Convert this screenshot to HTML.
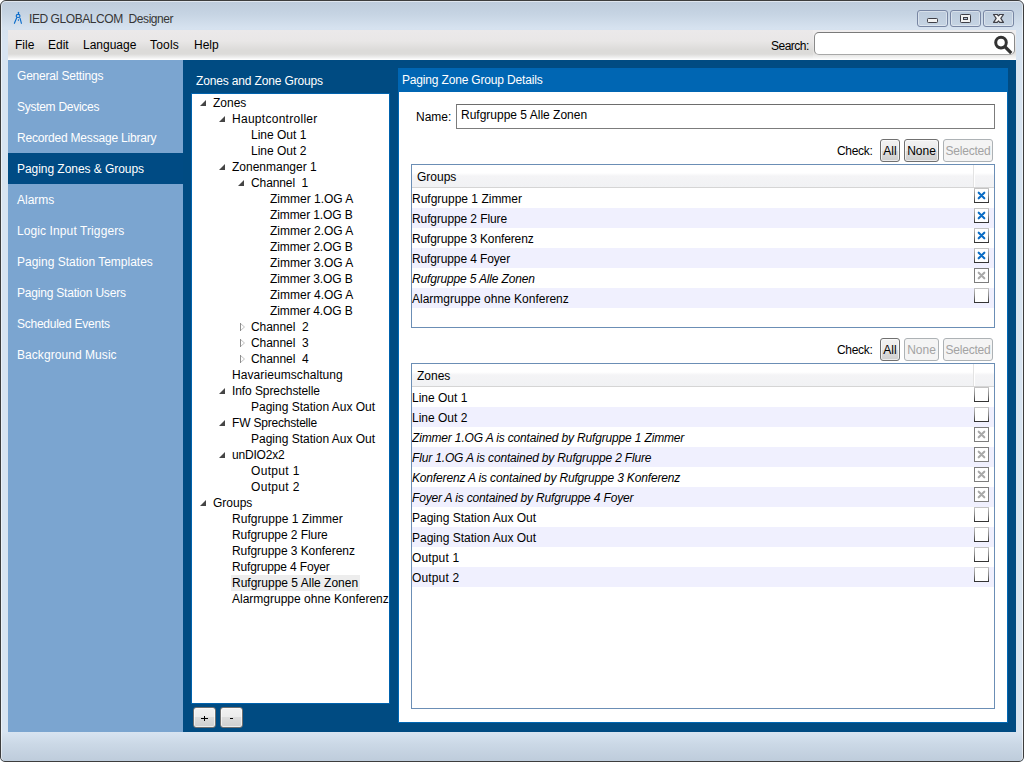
<!DOCTYPE html>
<html><head><meta charset="utf-8"><style>
*{box-sizing:border-box}
html,body{margin:0;padding:0;width:1024px;height:762px;overflow:hidden;background:#fff}
body{font-family:"Liberation Sans",sans-serif;font-size:12px;color:#000;position:relative}
.a{position:absolute}
.t{position:absolute;white-space:nowrap;line-height:14px;font-size:12px}
#frame{position:absolute;left:0;top:0;width:1024px;height:762px;border-radius:6px 6px 5px 5px;
 background:linear-gradient(#bdcbdb 0px,#c6d4e3 14px,#d6e2ef 28px,#d8e4f1 40px)}
#bottomframe{position:absolute;left:1px;width:1022px;top:732px;height:29px;background:linear-gradient(#d8e4f1,#cbd8e6 12px,#bfcddc 28px)}
#border{position:absolute;left:0;top:0;width:1024px;height:762px;border:1px solid #3d3d3d;border-radius:6px 6px 5px 5px}
#hl{position:absolute;left:1px;top:1px;width:1022px;height:760px;border:1px solid rgba(255,255,255,.5);border-radius:5px 5px 4px 4px;border-bottom:none}
#menubar{position:absolute;left:8px;top:30px;width:1008px;height:30px;
 background:linear-gradient(#ebe9ea 0px,#e9e7e7 11px,#dcdbd9 20px,#dcdbd9 24px,#efefef 27.5px,#fdfdfd 29.5px)}
#sidebar{position:absolute;left:8px;top:60px;width:175px;height:672px;background:#7ba5d0}
#main{position:absolute;left:183px;top:60px;width:833px;height:672px;background:#004b82}
.side{position:absolute;left:0;width:175px;height:31px;color:#fff}
.side span{position:absolute;left:9px;top:9px;line-height:14px;white-space:nowrap}
.side.sel{background:#004b84}
.tb{position:absolute;top:10px;width:31px;height:17px;border:1px solid #7886a3;border-radius:3px;
 background:linear-gradient(#bccbdc,#c6d4e3);box-shadow:inset 0 0 0 1px rgba(255,255,255,.4)}
.btn{position:absolute;border:1px solid #707070;border-radius:3px;
 background:linear-gradient(#f2f2f2,#ebebeb 50%,#dddddd 51%,#cfcfcf);box-shadow:inset 0 0 0 1px rgba(255,255,255,.6)}
.btn.pm{background:linear-gradient(#f2f2f2,#ebebeb 47%,#dddddd 47.5%,#cfcfcf)}
.btn.dis{border-color:#adb2b5;background:#f4f4f4;box-shadow:none;color:#a3a3a3}
.btn span{position:absolute;left:0;right:0;text-align:center;line-height:14px;white-space:nowrap}
.lst{position:absolute;left:411px;width:584px;border:1px solid #6b8eb5;background:#fff;overflow:hidden}
.hdr{position:absolute;left:0;top:0;width:582px;height:23px;background:linear-gradient(#fff 0,#fff 8px,#f4f4f6 11px,#f1f2f4 22px);border-bottom:1px solid #d5d5d5}
.sep{position:absolute;left:561px;top:0;width:2px;height:22px;border-left:1px solid #e3e3e3;border-right:1px solid #fff}
.row{position:absolute;left:0;width:582px;height:20px}
.row.alt{background:#f0f0fe}
.row .t{left:0px;top:4px}
.cb{position:absolute;left:562px;top:0;width:15px;height:15px;background:linear-gradient(#c8c8c8,#8a8a8a 50%,#2e2e2e)}
.cb:before{content:"";position:absolute;left:1px;top:1px;right:1px;bottom:1px;background:#fff}
.cb.dis{background:#7d7d7d}
</style></head><body>
<div id="frame"></div><div id="bottomframe"></div>
<svg class="a" style="left:11px;top:9px" width="15" height="17" viewBox="0 0 15 17">
 <g fill="none" stroke="#0d6dcb" stroke-width="1.15" stroke-linecap="round">
  <line x1="7.5" y1="3.2" x2="7.5" y2="5"/><ellipse cx="7.1" cy="6.9" rx="1.9" ry="1.6"/>
  <line x1="5.6" y1="9" x2="3.4" y2="14.3"/><line x1="9.1" y1="9.3" x2="10.4" y2="14.3"/><line x1="7.4" y1="10.6" x2="7.4" y2="11.6" stroke-width="0.9"/>
 </g></svg>
<div class="t" style="left:29px;top:12px;color:#363636;letter-spacing:-0.43px">IED GLOBALCOM&nbsp; Designer</div>
<div class="tb" style="left:917px"><svg class="a" style="left:8px;top:6px" width="13" height="8"><rect x="1.5" y="1.5" width="10" height="4" rx="0.8" fill="#f2f2f2" stroke="#3f3f46"/></svg></div>
<div class="tb" style="left:950px"><svg class="a" style="left:8px;top:2px" width="13" height="11"><rect x="1.5" y="1.5" width="10" height="8" rx="0.8" fill="#f2f2f2" stroke="#3f3f46"/><rect x="4.5" y="4.5" width="4" height="2" fill="#b3c1d4" stroke="#3f3f46"/></svg></div>
<div class="tb" style="left:983px"><svg class="a" style="left:8px;top:2px" width="14" height="12"><polygon points="1.5,1.5 5.3,1.5 6.5,2.9 7.7,1.5 11.5,1.5 8.8,5.4 11.5,9.3 7.7,9.3 6.5,7.9 5.3,9.3 1.5,9.3 4.2,5.4" fill="#f4f4f4" stroke="#3f3f46" stroke-width="1.2" stroke-linejoin="round"/></svg></div>
<div id="menubar"></div>
<div class="t" style="left:15px;top:38px;letter-spacing:0px">File</div>
<div class="t" style="left:48px;top:38px;letter-spacing:0px">Edit</div>
<div class="t" style="left:83px;top:38px;letter-spacing:0px">Language</div>
<div class="t" style="left:150px;top:38px;letter-spacing:0.2px">Tools</div>
<div class="t" style="left:194px;top:38px;letter-spacing:0px">Help</div>
<div class="t" style="left:771px;top:39px;letter-spacing:-0.5px">Search:</div>
<div class="a" style="left:813px;top:30px;width:203px;height:29px;background:rgba(255,255,255,.2)"></div>
<div class="a" style="left:814px;top:32px;width:201px;height:23px;border:1px solid #8a8a8a;border-top-color:#7a7a7a;border-bottom-color:#a8a8a8;border-radius:5px;background:#fff"></div>
<svg class="a" style="left:992px;top:34px" width="22" height="22"><circle cx="9" cy="8.6" r="5.3" fill="none" stroke="#333" stroke-width="3"/><line x1="12.6" y1="12.4" x2="19.3" y2="19.1" stroke="#333" stroke-width="3.3"/></svg>
<div id="sidebar">
<div class="side" style="top:0px"><span style="letter-spacing:-0.2px">General Settings</span></div>
<div class="side" style="top:31px"><span style="letter-spacing:-0.28px">System Devices</span></div>
<div class="side" style="top:62px"><span style="letter-spacing:-0.2px">Recorded Message Library</span></div>
<div class="side sel" style="top:93px"><span style="letter-spacing:-0.05px">Paging Zones &amp; Groups</span></div>
<div class="side" style="top:124px"><span style="letter-spacing:0px">Alarms</span></div>
<div class="side" style="top:155px"><span style="letter-spacing:0.1px">Logic Input Triggers</span></div>
<div class="side" style="top:186px"><span style="letter-spacing:0px">Paging Station Templates</span></div>
<div class="side" style="top:217px"><span style="letter-spacing:-0.2px">Paging Station Users</span></div>
<div class="side" style="top:248px"><span style="letter-spacing:-0.25px">Scheduled Events</span></div>
<div class="side" style="top:279px"><span style="letter-spacing:0.06px">Background Music</span></div>
</div>
<div id="main"></div>
<div class="t" style="left:196px;top:74px;color:#fff;letter-spacing:-0.15px">Zones and Zone Groups</div>
<div class="a" style="left:191px;top:93px;width:199px;height:611px;border:1px solid #0062ad;background:#fff;overflow:hidden">
<svg class="a" style="left:7px;top:5px" width="8" height="8"><polygon points="1,7 7,1 7,7" fill="#454545"/></svg>
<div class="t" style="left:21px;top:2px">Zones</div>
<svg class="a" style="left:26px;top:21px" width="8" height="8"><polygon points="1,7 7,1 7,7" fill="#454545"/></svg>
<div class="t" style="left:40px;top:18px;letter-spacing:0.28px">Hauptcontroller</div>
<div class="t" style="left:59px;top:34px">Line Out 1</div>
<div class="t" style="left:59px;top:50px">Line Out 2</div>
<svg class="a" style="left:26px;top:69px" width="8" height="8"><polygon points="1,7 7,1 7,7" fill="#454545"/></svg>
<div class="t" style="left:40px;top:66px">Zonenmanger 1</div>
<svg class="a" style="left:45px;top:85px" width="8" height="8"><polygon points="1,7 7,1 7,7" fill="#454545"/></svg>
<div class="t" style="left:59px;top:82px;letter-spacing:-0.1px">Channel&nbsp; 1</div>
<div class="t" style="left:78px;top:98px">Zimmer 1.OG A</div>
<div class="t" style="left:78px;top:114px;letter-spacing:-0.1px">Zimmer 1.OG B</div>
<div class="t" style="left:78px;top:130px">Zimmer 2.OG A</div>
<div class="t" style="left:78px;top:146px;letter-spacing:-0.1px">Zimmer 2.OG B</div>
<div class="t" style="left:78px;top:162px">Zimmer 3.OG A</div>
<div class="t" style="left:78px;top:178px;letter-spacing:-0.1px">Zimmer 3.OG B</div>
<div class="t" style="left:78px;top:194px">Zimmer 4.OG A</div>
<div class="t" style="left:78px;top:210px;letter-spacing:-0.1px">Zimmer 4.OG B</div>
<svg class="a" style="left:47px;top:228px" width="8" height="10"><path d="M1.5,1.5 L5.5,5 L1.5,8.5" fill="none" stroke="#c2c2c2"/><path d="M1.5,1 L1.5,9" stroke="#8e8e8e"/></svg>
<div class="t" style="left:59px;top:226px;letter-spacing:-0.05px">Channel&nbsp; 2</div>
<svg class="a" style="left:47px;top:244px" width="8" height="10"><path d="M1.5,1.5 L5.5,5 L1.5,8.5" fill="none" stroke="#c2c2c2"/><path d="M1.5,1 L1.5,9" stroke="#8e8e8e"/></svg>
<div class="t" style="left:59px;top:242px;letter-spacing:-0.05px">Channel&nbsp; 3</div>
<svg class="a" style="left:47px;top:260px" width="8" height="10"><path d="M1.5,1.5 L5.5,5 L1.5,8.5" fill="none" stroke="#c2c2c2"/><path d="M1.5,1 L1.5,9" stroke="#8e8e8e"/></svg>
<div class="t" style="left:59px;top:258px;letter-spacing:-0.05px">Channel&nbsp; 4</div>
<div class="t" style="left:40px;top:274px;letter-spacing:0.08px">Havarieumschaltung</div>
<svg class="a" style="left:26px;top:293px" width="8" height="8"><polygon points="1,7 7,1 7,7" fill="#454545"/></svg>
<div class="t" style="left:40px;top:290px;letter-spacing:-0.09px">Info Sprechstelle</div>
<div class="t" style="left:59px;top:306px">Paging Station Aux Out</div>
<svg class="a" style="left:26px;top:325px" width="8" height="8"><polygon points="1,7 7,1 7,7" fill="#454545"/></svg>
<div class="t" style="left:40px;top:322px;letter-spacing:-0.2px">FW Sprechstelle</div>
<div class="t" style="left:59px;top:338px">Paging Station Aux Out</div>
<svg class="a" style="left:26px;top:357px" width="8" height="8"><polygon points="1,7 7,1 7,7" fill="#454545"/></svg>
<div class="t" style="left:40px;top:354px;letter-spacing:-0.2px">unDIO2x2</div>
<div class="t" style="left:59px;top:370px;letter-spacing:0.33px">Output 1</div>
<div class="t" style="left:59px;top:386px;letter-spacing:0.33px">Output 2</div>
<svg class="a" style="left:7px;top:405px" width="8" height="8"><polygon points="1,7 7,1 7,7" fill="#454545"/></svg>
<div class="t" style="left:21px;top:402px">Groups</div>
<div class="t" style="left:40px;top:418px;letter-spacing:0.04px">Rufgruppe 1 Zimmer</div>
<div class="t" style="left:40px;top:434px;letter-spacing:-0.06px">Rufgruppe 2 Flure</div>
<div class="t" style="left:40px;top:450px;letter-spacing:-0.06px">Rufgruppe 3 Konferenz</div>
<div class="t" style="left:40px;top:466px;letter-spacing:-0.14px">Rufgruppe 4 Foyer</div>
<div class="a" style="left:39px;top:481px;width:129px;height:16px;background:#ededed"></div>
<div class="t" style="left:40px;top:482px">Rufgruppe 5 Alle Zonen</div>
<div class="t" style="left:40px;top:498px">Alarmgruppe ohne Konferenz</div>
</div>
<div class="btn pm" style="left:193px;top:707px;width:23px;height:21px"></div>
<div class="btn pm" style="left:220px;top:707px;width:23px;height:21px"></div>
<div class="a" style="left:201px;top:718px;width:7px;height:1px;background:#000"></div><div class="a" style="left:204px;top:716px;width:1px;height:5px;background:#000"></div>
<div class="a" style="left:230px;top:718px;width:3px;height:1px;background:#000"></div>
<div class="a" style="left:398px;top:68px;width:610px;height:655px;background:#0066b3"></div>
<div class="a" style="left:399px;top:92px;width:608px;height:630px;background:#fff"></div>
<div class="t" style="left:402px;top:73px;color:#fff;letter-spacing:-0.17px">Paging Zone Group Details</div>
<div class="t" style="left:416px;top:110px">Name:</div>
<div class="a" style="left:456px;top:104px;width:539px;height:25px;border:1px solid #7c7c7c;border-top-color:#6d6d6d;background:#fff"></div>
<div class="t" style="left:461px;top:108px">Rufgruppe 5 Alle Zonen</div>
<div class="t" style="left:837px;top:144px;letter-spacing:-0.3px">Check:</div>
<div class="btn" style="left:880px;top:139px;width:20px;height:23px"><span style="top:4px">All</span></div>
<div class="btn" style="left:904px;top:139px;width:35px;height:23px"><span style="top:4px">None</span></div>
<div class="btn dis" style="left:943px;top:139px;width:50px;height:23px"><span style="top:4px;letter-spacing:-0.2px">Selected</span></div>
<div class="lst" style="top:164px;height:164px">
<div class="hdr"><div class="t" style="left:5px;top:5px">Groups</div><div class="sep"></div></div>
<div class="row" style="top:23px"><div class="t" style="">Rufgruppe 1 Zimmer</div><div class="cb"><svg class="a" style="left:3px;top:3px" width="9" height="9" viewBox="0 0 9 9"><path d="M1.7,1.7 L7.3,7.3 M7.3,1.7 L1.7,7.3" stroke="#0a6cc4" stroke-width="2.1" stroke-linecap="round"/></svg></div></div>
<div class="row alt" style="top:43px"><div class="t" style="letter-spacing:-0.1px">Rufgruppe 2 Flure</div><div class="cb"><svg class="a" style="left:3px;top:3px" width="9" height="9" viewBox="0 0 9 9"><path d="M1.7,1.7 L7.3,7.3 M7.3,1.7 L1.7,7.3" stroke="#0a6cc4" stroke-width="2.1" stroke-linecap="round"/></svg></div></div>
<div class="row" style="top:63px"><div class="t" style="letter-spacing:-0.12px">Rufgruppe 3 Konferenz</div><div class="cb"><svg class="a" style="left:3px;top:3px" width="9" height="9" viewBox="0 0 9 9"><path d="M1.7,1.7 L7.3,7.3 M7.3,1.7 L1.7,7.3" stroke="#0a6cc4" stroke-width="2.1" stroke-linecap="round"/></svg></div></div>
<div class="row alt" style="top:83px"><div class="t" style="letter-spacing:-0.12px">Rufgruppe 4 Foyer</div><div class="cb"><svg class="a" style="left:3px;top:3px" width="9" height="9" viewBox="0 0 9 9"><path d="M1.7,1.7 L7.3,7.3 M7.3,1.7 L1.7,7.3" stroke="#0a6cc4" stroke-width="2.1" stroke-linecap="round"/></svg></div></div>
<div class="row" style="top:103px"><div class="t" style="font-style:italic;letter-spacing:-0.16px">Rufgruppe 5 Alle Zonen</div><div class="cb dis"><svg class="a" style="left:3px;top:3px" width="9" height="9" viewBox="0 0 9 9"><path d="M1.7,1.7 L7.3,7.3 M7.3,1.7 L1.7,7.3" stroke="#a9a9a9" stroke-width="2.1" stroke-linecap="round"/></svg></div></div>
<div class="row alt" style="top:123px"><div class="t" style="">Alarmgruppe ohne Konferenz</div><div class="cb"></div></div>
</div>
<div class="t" style="left:837px;top:343px;letter-spacing:-0.3px">Check:</div>
<div class="btn" style="left:880px;top:338px;width:20px;height:23px"><span style="top:4px">All</span></div>
<div class="btn dis" style="left:904px;top:338px;width:35px;height:23px"><span style="top:4px">None</span></div>
<div class="btn dis" style="left:943px;top:338px;width:50px;height:23px"><span style="top:4px;letter-spacing:-0.2px">Selected</span></div>
<div class="lst" style="top:363px;height:346px">
<div class="hdr"><div class="t" style="left:5px;top:5px">Zones</div><div class="sep"></div></div>
<div class="row" style="top:23px"><div class="t" style="">Line Out 1</div><div class="cb"></div></div>
<div class="row alt" style="top:43px"><div class="t" style="">Line Out 2</div><div class="cb"></div></div>
<div class="row" style="top:63px"><div class="t" style="font-style:italic;letter-spacing:-0.16px">Zimmer 1.OG A is contained by Rufgruppe 1 Zimmer</div><div class="cb dis"><svg class="a" style="left:3px;top:3px" width="9" height="9" viewBox="0 0 9 9"><path d="M1.7,1.7 L7.3,7.3 M7.3,1.7 L1.7,7.3" stroke="#a9a9a9" stroke-width="2.1" stroke-linecap="round"/></svg></div></div>
<div class="row alt" style="top:83px"><div class="t" style="font-style:italic;letter-spacing:-0.16px">Flur 1.OG A is contained by Rufgruppe 2 Flure</div><div class="cb dis"><svg class="a" style="left:3px;top:3px" width="9" height="9" viewBox="0 0 9 9"><path d="M1.7,1.7 L7.3,7.3 M7.3,1.7 L1.7,7.3" stroke="#a9a9a9" stroke-width="2.1" stroke-linecap="round"/></svg></div></div>
<div class="row" style="top:103px"><div class="t" style="font-style:italic;letter-spacing:-0.16px">Konferenz A is contained by Rufgruppe 3 Konferenz</div><div class="cb dis"><svg class="a" style="left:3px;top:3px" width="9" height="9" viewBox="0 0 9 9"><path d="M1.7,1.7 L7.3,7.3 M7.3,1.7 L1.7,7.3" stroke="#a9a9a9" stroke-width="2.1" stroke-linecap="round"/></svg></div></div>
<div class="row alt" style="top:123px"><div class="t" style="font-style:italic;letter-spacing:-0.16px">Foyer A is contained by Rufgruppe 4 Foyer</div><div class="cb dis"><svg class="a" style="left:3px;top:3px" width="9" height="9" viewBox="0 0 9 9"><path d="M1.7,1.7 L7.3,7.3 M7.3,1.7 L1.7,7.3" stroke="#a9a9a9" stroke-width="2.1" stroke-linecap="round"/></svg></div></div>
<div class="row" style="top:143px"><div class="t" style="">Paging Station Aux Out</div><div class="cb"></div></div>
<div class="row alt" style="top:163px"><div class="t" style="">Paging Station Aux Out</div><div class="cb"></div></div>
<div class="row" style="top:183px"><div class="t" style="letter-spacing:0.15px">Output 1</div><div class="cb"></div></div>
<div class="row alt" style="top:203px"><div class="t" style="letter-spacing:0.15px">Output 2</div><div class="cb"></div></div>
</div>
<div id="border"></div><div id="hl"></div>
</body></html>
